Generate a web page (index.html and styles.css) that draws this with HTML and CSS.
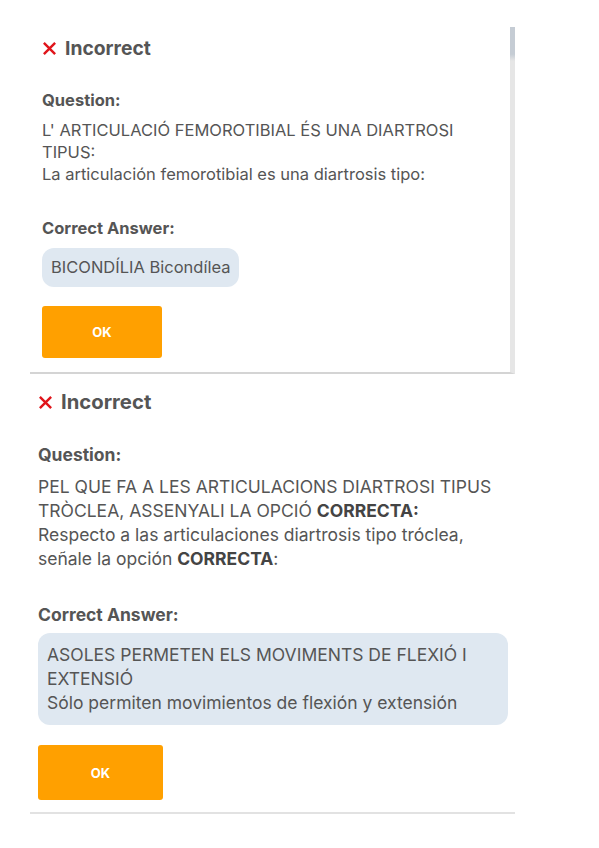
FILE: index.html
```html
<!DOCTYPE html>
<html>
<head>
<meta charset="utf-8">
<link rel="stylesheet" href="styles.css">
</head>
<body>
<div class="page">
  <section class="panel panel-small">
    <div class="scroll-thumb"></div>
    <h2 class="result"><svg class="x-icon" viewBox="0 0 16 16"><path d="M2 2 L14 14 M14 2 L2 14"/></svg>Incorrect</h2>
    <div class="label">Question:</div>
    <p class="text">L' ARTICULACIÓ FEMOROTIBIAL ÉS UNA DIARTROSI TIPUS:<br>La articulación femorotibial es una diartrosis tipo:</p>
    <div class="label answer-label">Correct Answer:</div>
    <div class="answer">BICONDÍLIA Bicondílea</div>
    <button class="ok">OK</button>
  </section>
  <section class="panel panel-large">
    <h2 class="result"><svg class="x-icon" viewBox="0 0 16 16"><path d="M2 2 L14 14 M14 2 L2 14"/></svg>Incorrect</h2>
    <div class="label">Question:</div>
    <p class="text">PEL QUE FA A LES ARTICULACIONS DIARTROSI TIPUS TRÒCLEA, ASSENYALI LA OPCIÓ <b>CORRECTA:</b><br>Respecto a las articulaciones diartrosis tipo tróclea, señale la opción <b>CORRECTA</b>:</p>
    <div class="label answer-label">Correct Answer:</div>
    <div class="answer">ASOLES PERMETEN ELS MOVIMENTS DE FLEXIÓ I EXTENSIÓ<br>Sólo permiten movimientos de flexión y extensión</div>
    <button class="ok">OK</button>
  </section>
</div>
</body>
</html>
```

FILE: styles.css
```css
* { box-sizing: border-box; }
body {
  margin: 0;
  background: #fff;
  font-family: Inter, "Noto Sans", sans-serif;
  color: #555;
}
.page {
  width: 485px;
  margin-left: 30px;
}
.panel {
  display: flex;
  flex-direction: column;
  align-items: flex-start;
}
.panel-small {
  position: relative;
  margin-top: 27px;
  padding: 0 10px 14px 12px;
  border-right: 5px solid #e6e6e6;
  border-bottom: 2px solid #d4d4d4;
  font-size: 16.5px;
}
.scroll-thumb {
  position: absolute;
  top: 0;
  right: -5px;
  width: 5px;
  height: 34px;
  background: linear-gradient(#c5ccd4 80%, #e6e6e6);
}
.panel-large {
  padding: 0 7px 12px 8px;
  border-bottom: 2px solid #e2e2e2;
  font-size: 17.5px;
}
.result {
  display: flex;
  align-items: center;
  gap: 8px;
  margin: 0;
  font-weight: 700;
  color: #555;
  line-height: 22px;
}
.panel-small .result { margin-top: 10px; font-size: 19.3px; }
.panel-large .result { margin-top: 17px; font-size: 20.3px; }
.x-icon {
  width: 15px;
  height: 15px;
  stroke: #e0151b;
  stroke-width: 2.6;
  fill: none;
  flex: none;
}
.label {
  font-weight: 700;
}
.panel-small .label { margin-top: 30px; line-height: 22px; }
.panel-large .label { margin-top: 30px; line-height: 24px; }
.text {
  margin: 0;
}
.panel-small .text { margin-top: 8px; line-height: 22px; }
.panel-large .text { margin-top: 8px; line-height: 24px; }
.text b { color: #444; }
.panel-small .answer-label { margin-top: 32px; }
.panel-large .answer-label { margin-top: 32px; }
.answer {
  background: #dfe8f1;
  border-radius: 12px;
}
.panel-small .answer {
  margin-top: 9px;
  padding: 8px 9px;
  line-height: 23px;
}
.panel-large .answer {
  margin-top: 6px;
  padding: 10px 9px;
  line-height: 24px;
  width: 100%;
}
.ok {
  border: none;
  border-radius: 3px;
  background: #ffa000;
  color: #fff;
  font-family: inherit;
  font-weight: 700;
  font-size: 13px;
}
.panel-small .ok { margin-top: 19px; width: 120px; height: 52px; }
.panel-large .ok { margin-top: 20px; width: 125px; height: 55px; }
```
